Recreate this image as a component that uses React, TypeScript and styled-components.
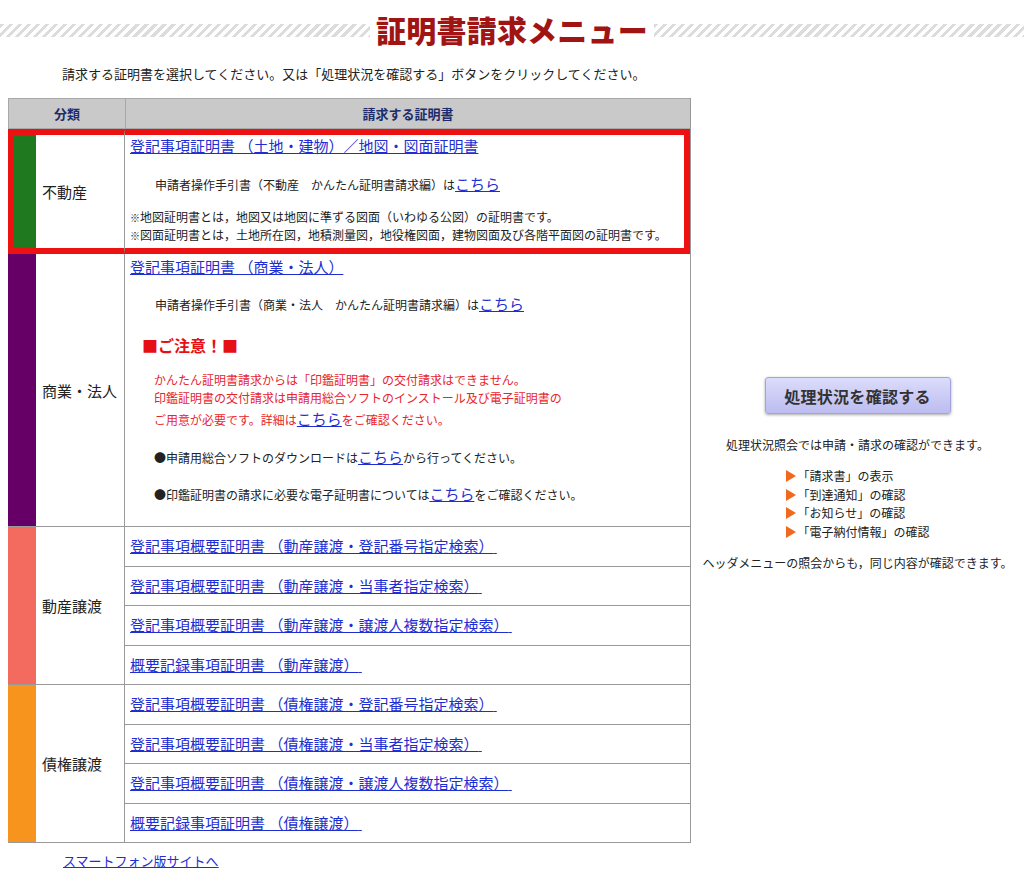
import React from 'react';
import styled, { createGlobalStyle } from 'styled-components';

const GlobalStyle = createGlobalStyle`
  body {
    margin: 0;
    background: #fff;
    color: #222;
    font-family: "Noto Sans CJK JP", "Noto Sans", sans-serif;
  }
`;

const HL = '#ee1111';

const transferGroups = [
  {
    label: '動産譲渡',
    color: '#f26b5e',
    items: [
      '登記事項概要証明書 （動産譲渡・登記番号指定検索）',
      '登記事項概要証明書 （動産譲渡・当事者指定検索）',
      '登記事項概要証明書 （動産譲渡・譲渡人複数指定検索）',
      '概要記録事項証明書 （動産譲渡）',
    ],
  },
  {
    label: '債権譲渡',
    color: '#f7941d',
    items: [
      '登記事項概要証明書 （債権譲渡・登記番号指定検索）',
      '登記事項概要証明書 （債権譲渡・当事者指定検索）',
      '登記事項概要証明書 （債権譲渡・譲渡人複数指定検索）',
      '概要記録事項証明書 （債権譲渡）',
    ],
  },
];

const checks = ['「請求書」の表示', '「到達通知」の確認', '「お知らせ」の確認', '「電子納付情報」の確認'];

export default function App() {
  return (
    <Page>
      <GlobalStyle />
      <Header>
        <Stripe />
        <Title>証明書請求メニュー</Title>
        <Stripe />
      </Header>
      <Intro>請求する証明書を選択してください。又は「処理状況を確認する」ボタンをクリックしてください。</Intro>

      <Main>
        <Table>
          <colgroup>
            <Col $w={28} />
            <Col $w={89} />
            <Col $w={565} />
          </colgroup>
          <thead>
            <tr>
              <HeadCell colSpan={2}>分類</HeadCell>
              <HeadCell>請求する証明書</HeadCell>
            </tr>
          </thead>
          <tbody>
            <tr>
              <BarCell $color="#1f7a1f" $hl />
              <LabelCell $hl>不動産</LabelCell>
              <ContentCell $hl $pad="1px 5px 4px">
                <MainLink href="#">登記事項証明書 （土地・建物）／地図・図面証明書</MainLink>
                <Guide $mt={19}>
                  申請者操作手引書（不動産　かんたん証明書請求編）は<Kochira href="#">こちら</Kochira>
                </Guide>
                <Notes>
                  <div><Mark>※</Mark>地図証明書とは，地図又は地図に準ずる図面（いわゆる公図）の証明書です。</div>
                  <div><Mark>※</Mark>図面証明書とは，土地所在図，地積測量図，地役権図面，建物図面及び各階平面図の証明書です。</div>
                </Notes>
              </ContentCell>
            </tr>
            <tr>
              <BarCell $color="#660066" />
              <LabelCell>商業・法人</LabelCell>
              <ContentCell $pad="3px 5px 20px">
                <MainLink href="#">登記事項証明書 （商業・法人）</MainLink>
                <Guide $mt={18}>
                  申請者操作手引書（商業・法人　かんたん証明書請求編）は<Kochira href="#">こちら</Kochira>
                </Guide>
                <Caution>■ご注意！■</Caution>
                <Warning>
                  <WarnLine>かんたん証明書請求からは「印鑑証明書」の交付請求はできません。</WarnLine>
                  <WarnLine>印鑑証明書の交付請求は申請用総合ソフトのインストール及び電子証明書の</WarnLine>
                  <WarnLine $tall>ご用意が必要です。詳細は<Kochira href="#">こちら</Kochira>をご確認ください。</WarnLine>
                </Warning>
                <Bullet $mt={14}>●申請用総合ソフトのダウンロードは<Kochira href="#">こちら</Kochira>から行ってください。</Bullet>
                <Bullet $mt={15}>●印鑑証明書の請求に必要な電子証明書については<Kochira href="#">こちら</Kochira>をご確認ください。</Bullet>
              </ContentCell>
            </tr>
            {transferGroups.map((group) =>
              group.items.map((item, i) => (
                <tr key={item}>
                  {i === 0 && <BarCell $color={group.color} rowSpan={group.items.length} />}
                  {i === 0 && <LabelCell rowSpan={group.items.length}>{group.label}</LabelCell>}
                  <LinkCell>
                    <MainLink href="#">{item}{'\u00a0'}</MainLink>
                  </LinkCell>
                </tr>
              ))
            )}
          </tbody>
        </Table>

        <Side>
          <StatusButton type="button">処理状況を確認する</StatusButton>
          <SideText>処理状況照会では申請・請求の確認ができます。</SideText>
          <CheckList>
            {checks.map((c) => (
              <CheckItem key={c}>
                <Arrow />
                {c}
              </CheckItem>
            ))}
          </CheckList>
          <SideText $mt={13}>ヘッダメニューの照会からも，同じ内容が確認できます。</SideText>
        </Side>
      </Main>

      <Footer>
        <FooterLink href="#">スマートフォン版サイトへ</FooterLink>
      </Footer>
    </Page>
  );
}

const Page = styled.div`
  width: 1024px;
  min-height: 877px;
`;

const Header = styled.header`
  display: flex;
  align-items: center;
  padding-top: 12px;
  gap: 4px;
`;

const Stripe = styled.div`
  flex: 1;
  height: 13px;
  margin-top: 3px;
  background: repeating-linear-gradient(
    135deg,
    #dcdcdc 0 3px,
    #ffffff 3px 6.4px
  );
`;

const Title = styled.h1`
  margin: 0;
  padding: 0 2px;
  font-size: 30px;
  line-height: 34px;
  font-weight: 900;
  color: #a01414;
  letter-spacing: 0.2px;
`;

const Intro = styled.p`
  margin: 18px 0 0 62px;
  font-size: 13px;
  line-height: 20px;
  color: #222;
`;

const Main = styled.div`
  display: flex;
  margin-top: 14px;
  padding-left: 8px;
`;

const Table = styled.table`
  flex: none;
  width: 682px;
  border-collapse: separate;
  border-spacing: 0;
  table-layout: fixed;
  border-right: 1px solid #999;

  td,
  th {
    box-sizing: border-box;
  }
`;

const Col = styled.col<{ $w: number }>`
  width: ${(p) => p.$w}px;
`;

const HeadCell = styled.th`
  height: 31px;
  padding: 0;
  background: #c9c9c9;
  border: 1px solid #a8a8a8;
  border-right: none;
  color: #1c2c6c;
  font-size: 13px;
  font-weight: 700;
  text-align: center;
`;

const BarCell = styled.td<{ $color: string; $hl?: boolean }>`
  padding: 0;
  background: ${(p) => p.$color};
  border-bottom: 1px solid #999;
  ${(p) =>
    p.$hl &&
    `
    border-top: 6px solid ${HL};
    border-bottom: 6px solid ${HL};
    border-left: 6px solid ${HL};
  `}
`;

const LabelCell = styled.td<{ $hl?: boolean }>`
  padding: 0 0 0 6px;
  border-bottom: 1px solid #999;
  border-right: 1px solid #999;
  font-size: 15px;
  color: #222;
  white-space: nowrap;
  vertical-align: middle;
  ${(p) =>
    p.$hl &&
    `
    border-top: 6px solid ${HL};
    border-bottom: 6px solid ${HL};
  `}
`;

const ContentCell = styled.td<{ $hl?: boolean; $pad: string }>`
  padding: ${(p) => p.$pad};
  border-bottom: 1px solid #999;
  font-size: 12px;
  line-height: 20px;
  vertical-align: top;
  ${(p) =>
    p.$hl &&
    `
    border-top: 6px solid ${HL};
    border-bottom: 6px solid ${HL};
    border-right: 6px solid ${HL};
  `}
`;

const LinkCell = styled.td`
  height: 39.5px;
  padding: 0 5px;
  border-bottom: 1px solid #999;
  vertical-align: middle;
`;

const MainLink = styled.a`
  display: block;
  width: fit-content;
  font-size: 15px;
  line-height: 20px;
  color: #1e2ed2;
  text-decoration: underline;
  white-space: nowrap;
`;

const Kochira = styled.a`
  font-size: 15px;
  line-height: 1;
  color: #1e2ed2;
  text-decoration: underline;
`;

const Guide = styled.div<{ $mt: number }>`
  margin: ${(p) => p.$mt}px 0 0 25px;
  font-size: 12px;
  line-height: 20px;
  color: #222;
`;

const Notes = styled.div`
  margin-top: 13px;
  font-size: 12px;
  line-height: 18px;
  color: #222;
  white-space: nowrap;
`;

const Mark = styled.span`
  font-size: 10px;
  line-height: 1;
`;

const Caution = styled.div`
  margin: 19px 0 0 12px;
  font-size: 16px;
  line-height: 22px;
  font-weight: 700;
  color: #e60f16;
`;

const Warning = styled.div`
  margin: 15px 0 0 24px;
  font-size: 12px;
  color: #e8252b;
`;

const WarnLine = styled.div<{ $tall?: boolean }>`
  line-height: ${(p) => (p.$tall ? 26 : 18)}px;
`;

const Bullet = styled.div<{ $mt: number }>`
  margin: ${(p) => p.$mt}px 0 0 24px;
  font-size: 12px;
  line-height: 22px;
  color: #222;
`;

const Side = styled.aside`
  flex: 1;
  display: flex;
  flex-direction: column;
  align-items: center;
  justify-content: center;
  padding-top: 8px;
`;

const StatusButton = styled.button`
  width: 186px;
  height: 37px;
  padding: 0;
  border: 1px solid #a2a2dc;
  border-radius: 3px;
  background: linear-gradient(#dcdcfc, #bcbcf0);
  box-shadow: 0 1px 3px rgba(0, 0, 0, 0.35);
  font-family: inherit;
  font-size: 16px;
  font-weight: 700;
  color: #333;
  letter-spacing: 0.3px;
`;

const SideText = styled.p<{ $mt?: number }>`
  margin: ${(p) => p.$mt ?? 22}px 0 0;
  font-size: 12px;
  line-height: 18px;
  color: #222;
  white-space: nowrap;
`;

const CheckList = styled.ul`
  margin: 13px 0 0;
  padding: 0;
  list-style: none;
`;

const CheckItem = styled.li`
  display: flex;
  align-items: center;
  font-size: 12px;
  line-height: 18.5px;
  color: #222;
`;

const Arrow = styled.span`
  width: 0;
  height: 0;
  margin-right: 2px;
  border-left: 10px solid #f0691e;
  border-top: 6px solid transparent;
  border-bottom: 6px solid transparent;
`;

const Footer = styled.footer`
  padding: 9px 0 0 63px;
  font-size: 13px;
  line-height: 18px;
`;

const FooterLink = styled.a`
  color: #1e2ed2;
  text-decoration: underline;
`;
